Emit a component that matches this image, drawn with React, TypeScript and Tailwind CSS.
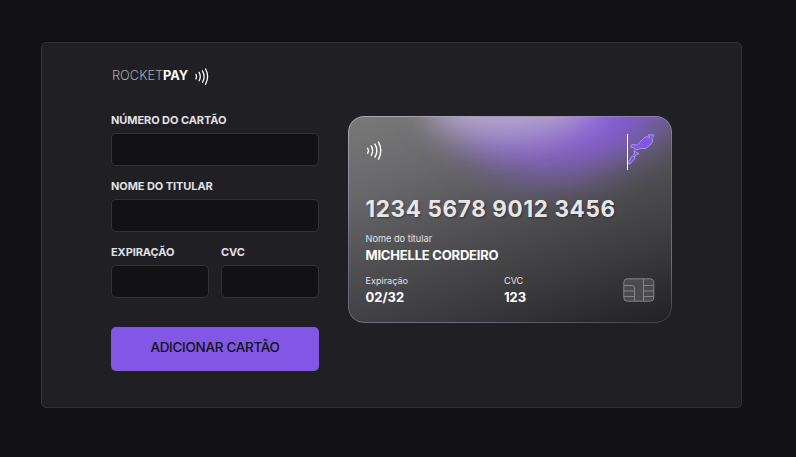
import React from "react";

function Waves({ className }: { className: string }) {
  return (
    <svg viewBox="0 0 16 20" className={className} fill="none" stroke="white" strokeWidth="1.5" strokeLinecap="round">
      <path d="M.8 7.500Q2.400 10 .8 12.800" />
      <path d="M4.600 5.200Q7.400 10 4.600 15" />
      <path d="M8.500 3.300Q12.400 10 8.500 17" />
      <path d="M12.200 1.200Q17 10 12.200 19.200" />
    </svg>
  );
}

function Rocket() {
  return (
    <svg viewBox="0 0 28 36" className="block h-[36px] w-[28px]" fill="#8257e5" stroke="#b49cec" strokeWidth=".9" strokeLinejoin="round">
      <rect x="0" y="0" width="1" height="36" fill="white" stroke="none" />
      <path d="M21.500 .800H26.500V3L24.800 4.500 25.800 7 24.500 9.500 21.500 12 19 14.500H14L11.500 15.200 8.500 16 7.500 14.200 4 13.200 5 10.300 10 11.200 13 8 16.500 4.500 19.500 2.500 22.500 3.500Z" />
      <path d="M7 16.500 9 18.200 12 19.500 8.500 21.500 6.500 20.500 7.500 19Z" />
      <path d="M5 22 8 22.500 7.500 25 4.500 28.500 2 30.500 1.800 27.500Z" />
    </svg>
  );
}

function Chip() {
  return (
    <svg viewBox="0 0 32 24" className="block h-[24px] w-[32px]" fill="none" stroke="#858588" strokeWidth="1">
      <rect x=".8" y=".8" width="30" height="22.400" rx="3.500" fill="#4b4b4e" />
      <path d="M1 7.500H9.500Q11.500 7.500 11.500 10V23M1 13H11.500M1 18.500H11.500M20.500 1V23M20.500 7.500H30.500M20.500 13H30.500M20.500 18.500H30.500" />
    </svg>
  );
}

function Field({ label, className = "" }: { label: string; className?: string }) {
  return (
    <label className={`block ${className}`}>
      <span className="block h-[21px] whitespace-nowrap pt-px text-[11px] font-bold leading-[14px] tracking-[-0.080px] text-[#e1e1e6]">{label}</span>
      <input className="block h-[33px] w-full rounded-[5px] border border-[#323238] bg-[#121214] px-2 text-white outline-none" />
    </label>
  );
}

function Card() {
  return (
    <section className="relative mt-[73px] h-[207px] w-[324px] overflow-hidden rounded-[16px] bg-[linear-gradient(162deg,#79797a_0%,#69696b_25%,#4e4e51_52%,#3a3a3d_75%,#212125_100%)] text-white">
      <div className="absolute -top-[72px] left-[105px] h-[132px] w-[190px] rotate-[4deg] rounded-[50%] bg-[#8b62d6] opacity-90 blur-[21px]" />
      <div className="absolute -top-[44px] left-[215px] h-[72px] w-[120px] rotate-[-6deg] rounded-[50%] bg-[#8257e5] opacity-55 blur-[18px]" />
      <div className="absolute -top-[48px] left-[78px] h-[70px] w-[174px] rotate-[-4deg] rounded-[50%] bg-[#bcb4ca] opacity-85 blur-[17px]" />
      <div className="absolute inset-0 rounded-[16px] bg-[linear-gradient(165deg,#b5b3b8_0%,#a29bb0_15%,#77728a_45%,#706c80_60%,#7c798c_78%,#484650_100%)] p-px opacity-85 [mask-composite:exclude] [mask-image:linear-gradient(#fff_0_0),linear-gradient(#fff_0_0)] [mask-origin:content-box,border-box] [mask-clip:content-box,border-box]" />
      <div className="relative flex h-full flex-col pl-[17.500px] pr-[17px] pt-[18px]">
        <div className="flex h-[36px] items-start justify-between">
          <Waves className="mt-[7px] h-[19px] w-[17px]" />
          <Rocket />
        </div>
        <div className="mt-[24.500px] whitespace-nowrap text-[22.500px] font-bold leading-[27px] tracking-[0.620px] text-[#e7e6e8] [text-shadow:1px_1px_2px_#0006]">1234 5678 9012 3456</div>
        <div className="mt-[11.500px] text-[9.200px] leading-[12px] text-[#e1e1e6]">Nome do titular</div>
        <div className="mt-[2px] text-[13px] font-bold leading-[17px] tracking-[-0.200px]">MICHELLE CORDEIRO</div>
        <div className="mt-[11px] flex">
          <div className="w-[138.500px]">
            <div className="text-[9.100px] leading-[12px] text-[#e1e1e6]">Expiração</div>
            <div className="mt-[2px] text-[13px] font-bold leading-[17px]">02/32</div>
          </div>
          <div>
            <div className="text-[9.100px] leading-[12px] text-[#e1e1e6]">CVC</div>
            <div className="mt-[2px] text-[13px] font-bold leading-[17px]">123</div>
          </div>
          <div className="ml-auto mt-[3px]"><Chip /></div>
        </div>
      </div>
    </section>
  );
}

export default function App() {
  return (
    <main className="h-[457px] w-[796px] overflow-hidden bg-[#121214] pl-[41px] pt-[42px] font-['Inter',sans-serif]">
      <div className="flex h-[366px] w-[701px] rounded-[5px] border border-[#323238] bg-[#202024] pl-[69px]">
        <form className="w-[208px] pt-[24px]">
          <div className="flex h-[18px] items-center pl-px text-[12.800px] leading-[18px] text-white">
            <span className="w-[51px] whitespace-nowrap font-light text-[#a8a8ac]">ROCKET</span>
            <span className="w-[32px] font-bold">PAY</span>
            <Waves className="h-[17px] w-[14px]" />
          </div>
          <Field label="NÚMERO DO CARTÃO" className="mt-[27px]" />
          <Field label="NOME DO TITULAR" className="mt-[12px]" />
          <div className="mt-[12px] grid grid-cols-2 gap-[12px]">
            <Field label="EXPIRAÇÃO" />
            <Field label="CVC" />
          </div>
          <button type="button" className="mt-[29px] block h-[44px] w-full rounded-[5px] bg-[#8257e5] pb-[3px] text-[13.500px] font-medium tracking-[-0.300px] text-[#121214]">
            ADICIONAR CARTÃO
          </button>
        </form>
        <div className="w-[29px]" />
        <Card />
      </div>
    </main>
  );
}
